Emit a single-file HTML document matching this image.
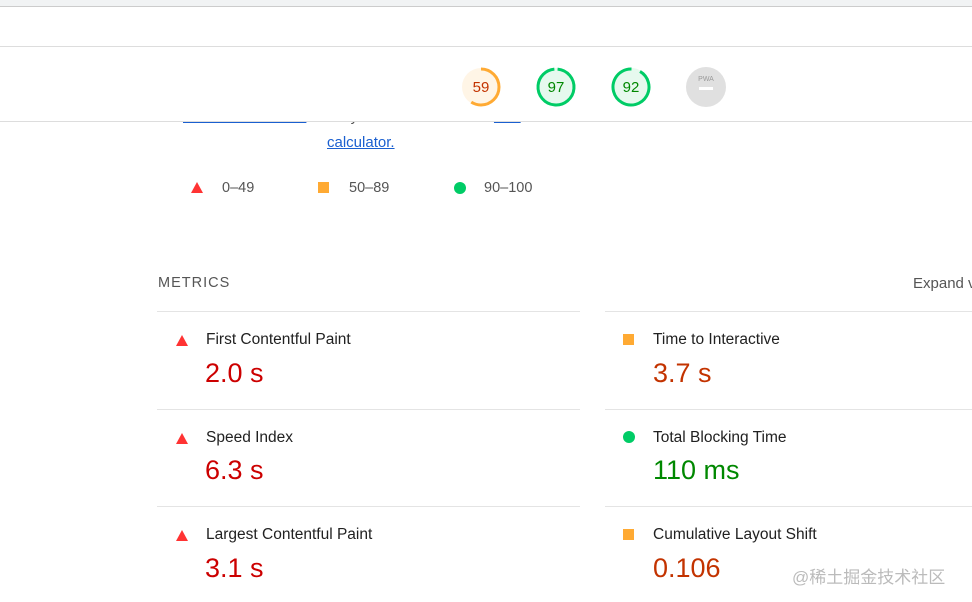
<!DOCTYPE html>
<html><head><meta charset="utf-8"><style>
*{margin:0;padding:0;box-sizing:border-box}
body{width:972px;height:602px;overflow:hidden;background:#fff;font-family:"Liberation Sans","DejaVu Sans",sans-serif;position:relative;color:#212121}
.abs{position:absolute}
.lbl{position:absolute;font-size:15.5px;color:#212121}
.val{position:absolute;font-size:27px}
.hr{position:absolute;height:1px;background:#e4e4e4}
.tri{position:absolute;width:0;height:0;border-left:6px solid transparent;border-right:6px solid transparent;border-bottom:11px solid #f33}
.sq{position:absolute;width:11px;height:11px;background:#fa3}
.dot{position:absolute;width:12px;height:12px;border-radius:50%;background:#0c6}
</style></head><body>
<div class="abs" style="left:0;top:0;width:972px;height:7px;background:#f1f3f4;border-bottom:1px solid #ccc"></div>
<div class="hr" style="left:0;top:46px;width:972px;background:#ddd"></div>
<div class="abs" style="left:183px;top:108px;font-size:15px;color:#555;white-space:nowrap"><span style="color:#1a5fd0;text-decoration:underline">score is calculated</span> directly from these metrics. <span style="color:#1a5fd0;text-decoration:underline">See</span></div>
<div class="abs" style="left:0;top:47px;width:972px;height:75px;background:#fff;border-bottom:1px solid #ddd"></div>
<svg class="abs" style="left:460px;top:66px" width="42" height="42"><circle cx="21" cy="21" r="19" fill="#fff5e6"/><circle cx="21" cy="21" r="18" fill="none" stroke="#fa3" stroke-width="3" stroke-dasharray="66.7 200" transform="rotate(-90 21 21)"/><text x="21" y="26" font-size="15" text-anchor="middle" fill="#c33300" font-family="Liberation Sans">59</text></svg>
<svg class="abs" style="left:535px;top:66px" width="42" height="42"><circle cx="21" cy="21" r="19" fill="#e6f9ee"/><circle cx="21" cy="21" r="18" fill="none" stroke="#0c6" stroke-width="3" stroke-dasharray="109.7 200" transform="rotate(-85 21 21)"/><text x="21" y="26" font-size="15" text-anchor="middle" fill="#080" font-family="Liberation Sans">97</text></svg>
<svg class="abs" style="left:610px;top:66px" width="42" height="42"><circle cx="21" cy="21" r="19" fill="#e6f9ee"/><circle cx="21" cy="21" r="18" fill="none" stroke="#0c6" stroke-width="3" stroke-dasharray="104 200" transform="rotate(-60 21 21)"/><text x="21" y="26" font-size="15" text-anchor="middle" fill="#080" font-family="Liberation Sans">92</text></svg>
<svg class="abs" style="left:685px;top:66px" width="42" height="42"><circle cx="21" cy="21" r="20" fill="#e0e0e0"/><text x="21" y="15" font-size="7" text-anchor="middle" fill="#999" font-family="Liberation Sans">PWA</text><rect x="14" y="21" width="14" height="3" fill="#fff"/></svg>
<div class="abs" style="left:327px;top:134px;font-size:15px;color:#1a5fd0;text-decoration:underline">calculator.</div>
<div class="tri" style="left:191px;top:182px"></div><div class="abs" style="left:222px;top:180px;font-size:14.5px;color:#555">0–49</div>
<div class="sq" style="left:318px;top:182px"></div><div class="abs" style="left:349px;top:180px;font-size:14.5px;color:#555">50–89</div>
<div class="dot" style="left:454px;top:182px"></div><div class="abs" style="left:484px;top:180px;font-size:14.5px;color:#555">90–100</div>
<div class="abs" style="left:158px;top:275px;font-size:14.5px;color:#555;letter-spacing:1px">METRICS</div>
<div class="abs" style="left:913px;top:275px;font-size:15px;color:#555;white-space:nowrap">Expand view</div>
<div class="hr" style="left:157px;top:311px;width:423px"></div><div class="hr" style="left:605px;top:311px;width:367px"></div>
<div class="hr" style="left:157px;top:409px;width:423px"></div><div class="hr" style="left:605px;top:409px;width:367px"></div>
<div class="hr" style="left:157px;top:506px;width:423px"></div><div class="hr" style="left:605px;top:506px;width:367px"></div>
<div class="tri" style="left:176px;top:335px"></div><div class="lbl" style="left:206px;top:331px">First Contentful Paint</div><div class="val" style="left:205px;top:358px;color:#c00">2.0 s</div>
<div class="tri" style="left:176px;top:433px"></div><div class="lbl" style="left:206px;top:429px">Speed Index</div><div class="val" style="left:205px;top:455px;color:#c00">6.3 s</div>
<div class="tri" style="left:176px;top:530px"></div><div class="lbl" style="left:206px;top:526px">Largest Contentful Paint</div><div class="val" style="left:205px;top:553px;color:#c00">3.1 s</div>
<div class="sq" style="left:623px;top:334px"></div><div class="lbl" style="left:653px;top:331px">Time to Interactive</div><div class="val" style="left:653px;top:358px;color:#c33300">3.7 s</div>
<div class="dot" style="left:623px;top:431px"></div><div class="lbl" style="left:653px;top:429px">Total Blocking Time</div><div class="val" style="left:653px;top:455px;color:#080">110 ms</div>
<div class="sq" style="left:623px;top:529px"></div><div class="lbl" style="left:653px;top:526px">Cumulative Layout Shift</div><div class="val" style="left:653px;top:553px;color:#c33300">0.106</div>
<div class="abs" style="left:792px;top:563px;font-size:17px;color:#bbb;font-family:'Liberation Sans','Noto Sans CJK SC',sans-serif">@稀土掘金技术社区</div>
</body></html>
